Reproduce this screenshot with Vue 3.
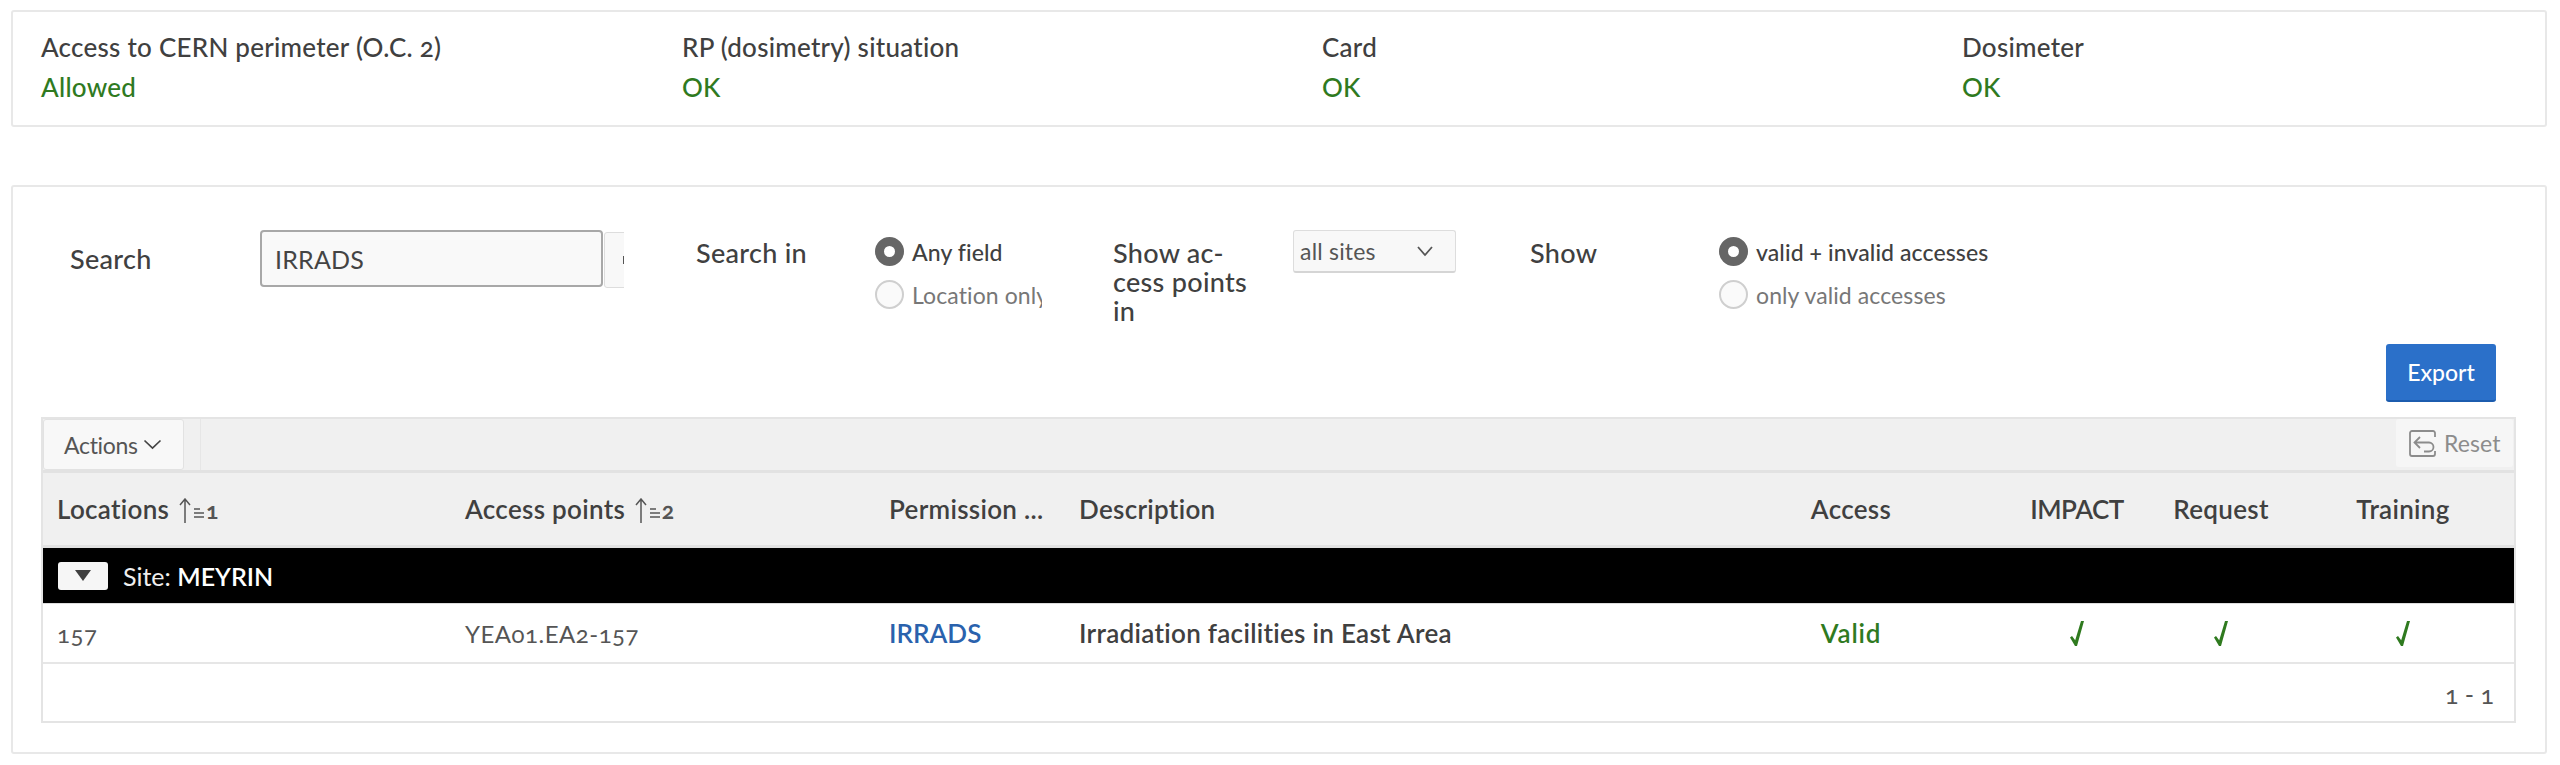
<script setup>
const status = [
  { label: 'Access to CERN perimeter (O.C. 2)', value: 'Allowed' },
  { label: 'RP (dosimetry) situation', value: 'OK' },
  { label: 'Card', value: 'OK' },
  { label: 'Dosimeter', value: 'OK' },
]
const checks = ['impact', 'request', 'training']
</script>

<template>
  <div class="page">
    <section class="card status">
      <div v-for="s in status" :key="s.label" class="status-item">
        <div class="status-label">{{ s.label }}</div>
        <div class="status-value">{{ s.value }}</div>
      </div>
    </section>

    <section class="card main">
      <form class="filters" @submit.prevent>
        <label class="field-label search-label">Search</label>
        <div class="search-box">
          <input class="search-input" type="text" value="IRRADS" />
          <button class="search-go" type="button"><span class="go-dot"></span></button>
        </div>
        <div class="field-label top">Search in</div>
        <div class="radios clipped">
          <label class="radio on"><input type="radio" name="in" checked />Any field</label>
          <label class="radio"><input type="radio" name="in" />Location only</label>
        </div>
        <div class="field-label top">Show ac-<br />cess points<br />in</div>
        <div class="select">
          <span>all sites</span>
          <svg width="18" height="12" viewBox="0 0 18 12"><path d="M2 2l7 8 7-8" fill="none" stroke="#555" stroke-width="1.8" /></svg>
        </div>
        <div class="field-label top">Show</div>
        <div class="radios">
          <label class="radio on"><input type="radio" name="show" checked />valid + invalid accesses</label>
          <label class="radio"><input type="radio" name="show" />only valid accesses</label>
        </div>
      </form>

      <div class="export-row">
        <button class="export" type="button">Export</button>
      </div>

      <div class="region">
        <div class="toolbar">
          <button class="actions" type="button">
            Actions
            <svg width="19" height="11" viewBox="0 0 19 11"><path d="M1.500 1.500L9.500 9l8-7.500" fill="none" stroke="#444" stroke-width="1.700" /></svg>
          </button>
          <div class="tool-sep"></div>
          <button class="reset" type="button">
            <svg width="27" height="27" viewBox="0 0 27 27" fill="none" stroke="#8c8c8c" stroke-width="1.800">
              <path d="M26 7V3a2 2 0 0 0-2-2H3a2 2 0 0 0-2 2v21a2 2 0 0 0 2 2h21a2 2 0 0 0 2-2v-3" />
              <path d="M11 7l-5.500 5.500L11 18M5.500 12.500H20a4.500 4.500 0 0 1 0 9H15" />
            </svg>
            Reset
          </button>
        </div>

        <div class="grid-row head">
          <div class="cell">Locations
            <svg class="sort" width="38" height="25" viewBox="0 0 38 25" fill="none" stroke="#555" stroke-width="1.500">
              <path d="M6 25V1M1 7l5-6 5 6" />
              <path d="M15 11h6M15 15h10M15 19h10" />
            </svg><span class="sort-n">1</span>
          </div>
          <div class="cell">Access points
            <svg class="sort" width="38" height="25" viewBox="0 0 38 25" fill="none" stroke="#555" stroke-width="1.500">
              <path d="M6 25V1M1 7l5-6 5 6" />
              <path d="M15 11h6M15 15h10M15 19h10" />
            </svg><span class="sort-n">2</span>
          </div>
          <div class="cell">Permission ...</div>
          <div class="cell">Description</div>
          <div class="cell center">Access</div>
          <div class="cell center caps">IMPACT</div>
          <div class="cell center">Request</div>
          <div class="cell center">Training</div>
        </div>

        <div class="group">
          <button class="collapse" type="button"><span class="tri"></span></button>
          <span class="group-text">Site: <b>MEYRIN</b></span>
        </div>

        <div class="grid-row data">
          <div class="cell plain">157</div>
          <div class="cell plain">YEA01.EA2-157</div>
          <div class="cell"><a class="link">IRRADS</a></div>
          <div class="cell desc">Irradiation facilities in East Area</div>
          <div class="cell center valid">Valid</div>
          <div v-for="c in checks" :key="c" class="cell center">
            <svg width="16" height="27" viewBox="0 0 16 27" :aria-label="c">
              <path d="M1 17.500l2-1.500 3.200 4.200L12 1h3L8 26H6z" fill="#2f7a1f" />
            </svg>
          </div>
        </div>

        <div class="pager">1 - 1</div>
      </div>
    </section>
  </div>
</template>

<style>
html,
body {
  background: #fff;
}
</style>

<style scoped>
.page {
  width: 2560px;
  box-sizing: border-box;
  padding: 10px 13px 0 11px;
  font-family: Lato, "Open Sans", sans-serif;
  font-size: 26px;
  letter-spacing: 0.250px;
  color: #404040;
  font-variant-numeric: oldstyle-nums;
}

.card {
  background: #fff;
  border: 2px solid #e8e8e8;
  border-radius: 3px;
  box-sizing: border-box;
}

.status {
  height: 117px;
  display: grid;
  grid-template-columns: 641px 640px 640px 1fr;
  padding: 19px 0 0 28px;
}

.status-label {
  line-height: 32px;
  font-weight: 500;
}

.status-value {
  margin-top: 8px;
  line-height: 32px;
  color: #2f7a1f;
  font-weight: 500;
}

.main {
  margin-top: 58px;
  height: 569px;
  padding: 43px 29px 0 28px;
}

.filters {
  display: grid;
  grid-template-columns: 190px 436px 179px 238px 180px 237px 189px 1fr;
  margin-left: 29px;
  margin-bottom: 19px;
  height: 95px;
}

.field-label {
  font-size: 27px;
  letter-spacing: 0.300px;
  font-weight: 500;
  line-height: 29px;
}

.search-label {
  line-height: 57px;
}

.top {
  padding-top: 8px;
}

.search-box {
  display: flex;
  width: 364px;
  height: 58px;
  overflow: hidden;
}

.search-input {
  flex: none;
  width: 343px;
  height: 57px;
  box-sizing: border-box;
  padding: 0 13px;
  border: 2px solid #a8a8a8;
  border-radius: 4px;
  background: #f9f9f9;
  font: inherit;
  font-size: 25px;
  letter-spacing: 0.200px;
  color: #444;
  outline: none;
}

.search-go {
  flex: none;
  width: 60px;
  height: 56px;
  margin: 2px 0 0 1px;
  padding: 0;
  border: 1px solid #ddd;
  border-radius: 3px;
  background: #f8f8f8;
  text-align: left;
}

.go-dot {
  display: block;
  width: 3px;
  height: 8px;
  margin-left: 18px;
  background: #555;
}

.radios {
  display: flex;
  flex-direction: column;
  gap: 14px;
  padding-top: 7px;
  font-size: 23px;
  letter-spacing: 0.100px;
}

.clipped {
  width: 167px;
  overflow: hidden;
  white-space: nowrap;
}

.radio {
  display: flex;
  align-items: center;
  gap: 8px;
  height: 29px;
  color: #777;
  white-space: nowrap;
}

.radio.on {
  color: #404040;
  font-weight: 500;
}

.radio input {
  appearance: none;
  flex: none;
  width: 29px;
  height: 29px;
  margin: 0;
  box-sizing: border-box;
  border: 2px solid #cfcfcf;
  border-radius: 50%;
  background: #fafafa;
}

.radio input:checked {
  border: 9px solid #666;
  background: #fff;
}

.select {
  width: 163px;
  height: 43px;
  box-sizing: border-box;
  display: flex;
  align-items: center;
  justify-content: space-between;
  padding: 0 21px 0 6px;
  border: 1px solid #ddd;
  border-bottom: 2px solid #d5d5d5;
  border-radius: 3px;
  background: #f8f8f8;
  font-size: 23px;
  letter-spacing: 0.200px;
  color: #555;
}

.export-row {
  display: flex;
  justify-content: flex-end;
  padding-right: 20px;
}

.export {
  width: 110px;
  height: 58px;
  border: none;
  border-bottom: 2px solid #1c5cae;
  border-radius: 3px;
  background: #2b70c9;
  color: #fff;
  font: inherit;
  font-size: 23px;
  letter-spacing: 0;
  font-weight: 500;
}

.region {
  margin-top: 15px;
  width: 2475px;
  height: 306px;
  box-sizing: border-box;
  border: 2px solid #e4e4e4;
}

.toolbar {
  display: flex;
  align-items: flex-start;
  height: 54px;
  box-sizing: border-box;
  border-bottom: 3px solid #e2e2e2;
  background: #f0f0f0;
}

.actions {
  display: flex;
  align-items: center;
  gap: 5px;
  width: 141px;
  height: 51px;
  box-sizing: border-box;
  padding: 0 0 0 20px;
  border: 1px solid #e2e2e2;
  border-radius: 3px;
  background: #f8f8f8;
  font: inherit;
  font-size: 23px;
  letter-spacing: -0.300px;
  color: #555;
}

.tool-sep {
  width: 1px;
  height: 51px;
  margin-left: 16px;
  background: #e6e6e6;
}

.reset {
  display: flex;
  align-items: center;
  gap: 8px;
  width: 117px;
  height: 48px;
  box-sizing: border-box;
  margin-left: auto;
  margin-right: 1px;
  padding: 0 0 0 13px;
  border: none;
  border-radius: 3px;
  background: #f6f6f6;
  font: inherit;
  font-size: 23px;
  letter-spacing: 0.100px;
  color: #8c8c8c;
}

.grid-row {
  display: grid;
  grid-template-columns: 408px 424px 190px 633px 306px 146px 142px 222px;
  align-items: center;
}

.head {
  height: 75px;
  background: #f0f0f0;
  border-bottom: 3px solid #e2e2e2;
  box-sizing: border-box;
  font-weight: 600;
  font-size: 26px;
  letter-spacing: 0.300px;
}

.cell {
  padding: 0 14px;
  white-space: nowrap;
}

.center {
  padding: 0;
  text-align: center;
}

.caps {
  letter-spacing: -0.500px;
}

.sort {
  margin-left: 3px;
  vertical-align: -4px;
}

.sort-n {
  margin-left: -11px;
  font-size: 23px;
  font-weight: 700;
  color: #555;
}

.group {
  display: flex;
  align-items: center;
  gap: 15px;
  height: 55px;
  padding-left: 15px;
  background: #000;
  color: #eee;
  font-size: 25px;
  letter-spacing: 0;
}

.group b {
  color: #fff;
  font-weight: 600;
}

.collapse {
  display: flex;
  align-items: center;
  justify-content: center;
  width: 50px;
  height: 28px;
  padding: 0;
  border: none;
  border-radius: 3px;
  background: #f6f6f6;
}

.tri {
  width: 0;
  height: 0;
  border-left: 8px solid transparent;
  border-right: 8px solid transparent;
  border-top: 11px solid #404040;
}

.data {
  height: 61px;
  box-sizing: border-box;
  border-top: 1px solid #ddd;
  border-bottom: 2px solid #e6e6e6;
}

.plain {
  font-size: 24px;
  letter-spacing: 0.500px;
  color: #555;
}

.link {
  color: #2a62ad;
  font-weight: 600;
  letter-spacing: 0;
}

.desc {
  font-weight: 600;
  letter-spacing: 0.300px;
}

.valid {
  color: #2f7a1f;
  font-weight: 600;
  letter-spacing: 0.800px;
}

.center svg {
  display: block;
  margin: 0 auto;
}

.pager {
  height: 57px;
  line-height: 60px;
  padding-right: 20px;
  text-align: right;
  font-size: 25px;
  letter-spacing: 0;
  color: #555;
}
</style>
